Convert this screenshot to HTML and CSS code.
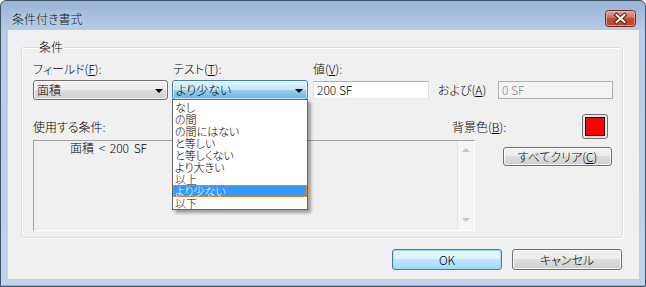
FILE: index.html
```html
<!DOCTYPE html>
<html lang="ja">

<head>
    <meta charset="UTF-8">
    <meta name="viewport" content="width=device-width, initial-scale=1.0">
    <title>条件付き書式</title>
    <link rel="stylesheet" href="styles.css">
</head>

<body>
    <div class="window">
        <div class="titlebar">
            <span class="title">条件付き書式</span>
            <button class="close" aria-label="閉じる">
                <svg width="31" height="17" viewBox="0 0 31 17">
                    <defs>
                        <linearGradient id="red" x1="0" y1="0" x2="0" y2="1">
                            <stop offset="0" stop-color="#e8a89a" />
                            <stop offset="0.45" stop-color="#d2705e" />
                            <stop offset="0.5" stop-color="#c44a33" />
                            <stop offset="1" stop-color="#c2452c" />
                        </linearGradient>
                    </defs>
                    <rect x="0.5" y="0.5" width="30" height="16" rx="3" fill="url(#red)" stroke="#6b2a22" />
                    <rect x="1.5" y="1.5" width="28" height="14" rx="2" fill="none" stroke="#f2c4b8" stroke-opacity="0.6" />
                    <path d="M11.5 5 L19.5 12 M19.5 5 L11.5 12" stroke="#4a1d17" stroke-width="4" stroke-linecap="square" />
                    <path d="M11.5 5 L19.5 12 M19.5 5 L11.5 12" stroke="#ffffff" stroke-width="2" stroke-linecap="square" />
                </svg>
            </button>
        </div>

        <div class="client">
            <fieldset class="group">
                <legend>条件</legend>

                <div class="labels">
                    <span class="col-field">フィールド(<u>F</u>):</span>
                    <span class="col-test">テスト(<u>T</u>):</span>
                    <span>値(<u>V</u>):</span>
                </div>

                <div class="controls">
                    <div class="combo combo-field">
                        <span>面積</span>
                        <i class="arrow"></i>
                    </div>
                    <div class="combo combo-test open">
                        <span>より少ない</span>
                        <i class="arrow"></i>
                        <ul class="dropdown">
                            <li>なし</li>
                            <li>の間</li>
                            <li>の間にはない</li>
                            <li>と等しい</li>
                            <li>と等しくない</li>
                            <li>より大きい</li>
                            <li>以上</li>
                            <li class="selected">より少ない</li>
                            <li>以下</li>
                        </ul>
                    </div>
                    <div class="textbox value">200 SF</div>
                    <span class="and">および(<u>A</u>)</span>
                    <div class="textbox disabled">0 SF</div>
                </div>

                <div class="row-color">
                    <span>使用する条件:</span>
                    <span>背景色(<u>B</u>):</span>
                    <div class="swatch"><span></span></div>
                </div>

                <div class="row-cond">
                    <div class="cond-box">
                        <div class="cond-text">面積 &lt; 200 SF</div>
                        <div class="scrollbar">
                            <i class="tri up"></i>
                            <i class="tri down"></i>
                        </div>
                    </div>
                    <button class="btn clear">すべてクリア(<u>C</u>)</button>
                </div>
            </fieldset>

            <div class="actions">
                <button class="btn default">OK</button>
                <button class="btn">キャンセル</button>
            </div>
        </div>
    </div>
</body>

</html>
```

FILE: styles.css
```css
body {
    margin: 0;
    background-color: #ffffff;
    font-family: "Noto Sans CJK JP", "Liberation Sans", sans-serif;
    font-size: 12px;
    font-weight: 300;
    line-height: 12px;
    color: #000000;
    font-feature-settings: "palt";
}

u {
    text-decoration: underline;
    text-underline-offset: 1px;
}

/* window frame */
.window {
    box-sizing: border-box;
    width: 646px;
    height: 287px;
    border: 1px solid #3f5468;
    border-radius: 6px 6px 0 0;
    background: linear-gradient(#98b3d4, #b6cde7 30px, #bdd4ec);
    box-shadow: inset 0 -1px 0 #5ccbe9;
    padding: 0 6px 7px 7px;
    display: flex;
    flex-direction: column;
}

.titlebar {
    height: 29px;
    box-sizing: border-box;
    padding: 6px 3px 0 4px;
    display: flex;
    align-items: center;
    justify-content: space-between;
}

.title {
    font-size: 12px;
    color: #101820;
    text-shadow: 0 0 6px rgba(255, 255, 255, 0.8);
}

.close {
    border: none;
    padding: 0;
    background: none;
    width: 31px;
    height: 17px;
    display: block;
}

.close svg {
    display: block;
}

.client {
    height: 249px;
    box-sizing: border-box;
    background-color: #f0f0f0;
    padding: 11px 16px 0 13px;
}

/* group box */
.group {
    margin: 0;
    border: 1px solid #d5dfe5;
    border-radius: 3px;
    box-shadow: inset 1px 1px 0 #ffffff, 1px 1px 0 #ffffff;
    padding: 10px 9px 6px 11px;
    min-width: 0;
}

.group legend {
    margin-left: 5px;
    padding: 0 1px;
    line-height: 12px;
}

.labels {
    display: flex;
    height: 12px;
}

.col-field,
.col-test {
    width: 140px;
}

.controls {
    display: flex;
    align-items: center;
    height: 20px;
    margin-top: 5px;
}

.combo {
    position: relative;
    box-sizing: border-box;
    height: 20px;
    border: 1px solid #707070;
    border-radius: 3px;
    background: linear-gradient(#f2f2f2, #ebebeb 50%, #dddddd 50%, #cfcfcf);
    box-shadow: inset 0 0 0 1px rgba(255, 255, 255, 0.7);
    display: flex;
    align-items: center;
    padding: 0 4px 0 3px;
}

.combo span {
    flex: 1;
}

.combo-field {
    width: 135px;
}

.combo-test {
    width: 136px;
    margin-left: 4px;
    border-color: #3c7fb1;
    background: linear-gradient(#e5f4fc, #c4e5f6 50%, #98d1ef 50%, #68b3db);
}

.arrow {
    width: 0;
    height: 0;
    border-left: 4px solid transparent;
    border-right: 4px solid transparent;
    border-top: 4px solid #000000;
    margin-top: 1px;
}

.dropdown {
    position: absolute;
    z-index: 10;
    top: 18px;
    left: -1px;
    width: 136px;
    box-sizing: border-box;
    margin: 0;
    padding: 1px 0 0;
    list-style: none;
    background-color: #ffffff;
    border: 1px solid #646464;
    box-shadow: 3px 3px 3px rgba(0, 0, 0, 0.35);
}

.dropdown li {
    height: 12px;
    font-size: 11px;
    line-height: 12px;
    padding-left: 2px;
    white-space: nowrap;
}

.dropdown .selected {
    background-color: #3399ff;
    color: #ffffff;
    outline: 1px dotted #e8902a;
    outline-offset: -1px;
}

.textbox {
    box-sizing: border-box;
    height: 18px;
    border: 1px solid #abadb3;
    border-color: #abadb3 #dbdfe6 #e3e9ef #e2e3ea;
    background-color: #ffffff;
    padding: 0 3px;
    display: flex;
    align-items: center;
}

.value {
    width: 116px;
    margin-left: 5px;
}

.and {
    margin-left: 9px;
}

.disabled {
    width: 115px;
    margin-left: auto;
    border-color: #afafaf;
    background-color: #f4f4f4;
    color: #8a8a8a;
}

/* colour row */
.row-color {
    display: grid;
    grid-template-columns: 419px 130px 26px;
    align-items: center;
    height: 25px;
    margin-top: 14px;
}

.swatch {
    box-sizing: border-box;
    width: 26px;
    height: 25px;
    border: 1px solid #707070;
    border-radius: 3px;
    background-color: #e8e8e8;
    padding: 2px;
}

.swatch span {
    display: block;
    height: 100%;
    box-sizing: border-box;
    border: 1px solid #000000;
    background-color: #ff0000;
}

.row-cond {
    display: flex;
    align-items: flex-start;
    margin-top: 1px;
}

.cond-box {
    box-sizing: border-box;
    width: 442px;
    height: 91px;
    border: 1px solid;
    border-color: #a0a0a0 #ffffff #ffffff #a0a0a0;
    display: flex;
}

.cond-text {
    flex: 1;
    padding: 1px 0 0 36px;
    word-spacing: 2px;
}

.scrollbar {
    width: 16px;
    background-color: #f5f5f5;
    border-left: 1px solid #e4e4e4;
    display: flex;
    flex-direction: column;
    align-items: center;
    justify-content: space-between;
    padding: 7px 0 8px;
}

.tri {
    width: 0;
    height: 0;
    border-left: 4px solid transparent;
    border-right: 4px solid transparent;
}

.tri.up {
    border-bottom: 4px solid #c4c4c4;
}

.tri.down {
    border-top: 4px solid #c4c4c4;
}

/* buttons */
.btn {
    box-sizing: border-box;
    font-family: inherit;
    font-size: 12px;
    font-weight: 300;
    line-height: 12px;
    color: #000000;
    border: 1px solid #707070;
    border-radius: 3px;
    background: linear-gradient(#f2f2f2, #ebebeb 50%, #dddddd 50%, #cfcfcf);
    box-shadow: inset 0 0 0 1px rgba(255, 255, 255, 0.75);
    padding: 0;
    font-feature-settings: "palt";
}

.clear {
    width: 109px;
    height: 19px;
    margin: 7px 0 0 28px;
}

.actions {
    display: flex;
    justify-content: flex-end;
    gap: 10px;
    margin-top: 11px;
    padding-right: 1px;
}

.actions .btn {
    width: 110px;
    height: 21px;
}

.btn.default {
    border-color: #3c7fb1;
    background: linear-gradient(#eaf6fd, #d9f0fc 50%, #bee6fd 50%, #a7d9f5);
    box-shadow: inset 0 0 0 1px #9fdaf5;
}
```
